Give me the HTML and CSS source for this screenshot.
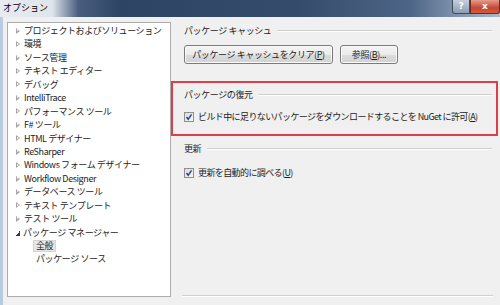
FILE: index.html
```html
<!DOCTYPE html>
<html lang="ja">
<head>
  <meta charset="UTF-8" />
  <title>オプション</title>
  <link rel="stylesheet" href="styles.css">
</head>
<body>
  <div class="titlebar">
    <span class="title">オプション</span>
    <span class="caption-btns">
      <span class="cbtn help">?</span>
      <span class="cbtn close">x</span>
    </span>
  </div>

  <div class="window">
    <ul class="tree">
      <li><span class="arrow"></span>プロジェクトおよびソリューション</li>
      <li><span class="arrow"></span>環境</li>
      <li><span class="arrow"></span>ソース管理</li>
      <li><span class="arrow"></span>テキスト エディター</li>
      <li><span class="arrow"></span>デバッグ</li>
      <li><span class="arrow"></span>IntelliTrace</li>
      <li><span class="arrow"></span>パフォーマンス ツール</li>
      <li><span class="arrow"></span>F# ツール</li>
      <li><span class="arrow"></span>HTML デザイナー</li>
      <li><span class="arrow"></span>ReSharper</li>
      <li><span class="arrow"></span>Windows フォーム デザイナー</li>
      <li><span class="arrow"></span>Workflow Designer</li>
      <li><span class="arrow"></span>データベース ツール</li>
      <li><span class="arrow"></span>テキスト テンプレート</li>
      <li><span class="arrow"></span>テスト ツール</li>
      <li><span class="arrow open"></span>パッケージ マネージャー</li>
      <li class="child"><span class="selected">全般</span></li>
      <li class="child">パッケージ ソース</li>
    </ul>

    <div class="panel">
      <div class="group cache">
        <div class="group-head"><span>パッケージ キャッシュ</span><span class="rule"></span></div>
        <div class="buttons">
          <button class="btn wide">パッケージ キャッシュをクリア(<u>P</u>)</button>
          <button class="btn">参照(<u>B</u>)...</button>
        </div>
      </div>

      <div class="group restore">
        <div class="group-head"><span>パッケージの復元</span><span class="rule"></span></div>
        <label class="check">
          <span class="box"><svg width="10" height="10" viewBox="0 0 10 10"><path d="M2.5 5 L4.2 7.2 L7.6 2.4" fill="none" stroke="#26418a" stroke-width="1.4"/></svg></span>
          ビルド中に足りないパッケージをダウンロードすることを NuGet に許可(<u>A</u>)
        </label>
      </div>

      <div class="group update">
        <div class="group-head"><span>更新</span><span class="rule"></span></div>
        <label class="check">
          <span class="box"><svg width="10" height="10" viewBox="0 0 10 10"><path d="M2.5 5 L4.2 7.2 L7.6 2.4" fill="none" stroke="#26418a" stroke-width="1.4"/></svg></span>
          更新を自動的に調べる(<u>U</u>)
        </label>
      </div>

      <div class="footer-rule"></div>
    </div>
  </div>
</body>
</html>
```

FILE: styles.css
```css
body {
  margin: 0;
  width: 500px;
  height: 305px;
  overflow: hidden;
  background: #f0f0f0;
  font-family: "Noto Sans CJK JP", "Noto Sans", sans-serif;
  font-size: 9px;
  color: #1c1c1c;
  display: flex;
  flex-direction: column;
}
.titlebar {
  height: 17px;
  flex: none;
  display: flex;
  justify-content: space-between;
  background: linear-gradient(to right, #e8ecf1 0, #dfe5ec 52px, #4a5f80 78px, #2e4465 120px, #364c6c 300px, #4d6586 410px, #7b8fa9 452px, #a9b7c8 500px);
}
.title {
  padding: 2px 0 0 3px;
  line-height: 12px;
  color: #000;
}
.caption-btns {
  display: flex;
  height: 14px;
}
.cbtn {
  color: #fff;
  font-family: "DejaVu Sans", sans-serif;
  font-weight: bold;
  text-align: center;
  line-height: 13px;
  font-size: 9px;
  border: 1px solid #3d4b5e;
  border-top: none;
}
.help {
  width: 16px;
  background: linear-gradient(#c4cfdb, #8d9db2);
  border-radius: 0 0 0 3px;
}
.close {
  width: 28px;
  background: linear-gradient(#e59c8d, #c84632 60%, #d35a40);
  border-color: #6b2a22;
  border-radius: 0 0 3px 0;
}
.window {
  flex: 1;
  display: flex;
  border-left: 3px solid #b9cbe0;
  padding: 5px 0 8px 4px;
}
.tree {
  list-style: none;
  margin: 0;
  padding: 1px 0 0 0;
  width: 162px;
  background: #fff;
  border: 1px solid #acacac;
}
.tree li {
  height: 13.45px;
  line-height: 13.45px;
  padding-left: 16px;
  display: flex;
  align-items: center;
  white-space: nowrap;
  letter-spacing: -0.4px;
}
.tree li.child {
  padding-left: 28px;
}
.arrow {
  width: 0;
  height: 0;
  margin: 0 4px 0 -8px;
  border-left: 4px solid #a6a6a6;
  border-top: 3px solid transparent;
  border-bottom: 3px solid transparent;
  position: relative;
}
.arrow::after {
  content: "";
  position: absolute;
  left: -3px;
  top: -1.5px;
  border-left: 2px solid #fff;
  border-top: 1.5px solid transparent;
  border-bottom: 1.5px solid transparent;
}
.arrow.open {
  border: none;
  width: 5px;
  height: 5px;
  background: linear-gradient(to bottom right, transparent 50%, #3a3a3a 50%);
  margin: 2px 3px 0 -9px;
}
.arrow.open::after {
  display: none;
}
.selected {
  background: #e6e6e6;
  border: 1px solid #d4d4d4;
  margin-left: -3px;
  padding: 0 2px;
  line-height: 10px;
}
.panel {
  flex: 1;
  display: flex;
  flex-direction: column;
  padding-right: 2px;
}
.group {
  border: 2px solid transparent;
  padding: 0 4px 0 11px;
}
.group.cache {
  padding-bottom: 15px;
}
.group.restore {
  border-color: #dc3f4a;
  padding-top: 5px;
  padding-bottom: 11px;
}
.group.update {
  padding-top: 4px;
}
.group-head {
  display: flex;
  align-items: center;
  line-height: 13px;
  white-space: nowrap;
  letter-spacing: -0.4px;
}
.rule {
  flex: 1;
  margin-left: 6px;
  border-top: 1px solid #cdcdcd;
  border-bottom: 1px solid #fff;
}
.buttons {
  display: flex;
  gap: 7px;
  margin-top: 8px;
}
.btn {
  height: 19px;
  width: 58px;
  padding: 0;
  font: inherit;
  letter-spacing: -0.4px;
  color: #1c1c1c;
  border: 1px solid #7a7a7a;
  border-radius: 3px;
  background: linear-gradient(#f4f4f4 0, #ebebeb 50%, #dcdcdc 51%, #d2d2d2 100%);
  box-shadow: inset 0 0 0 1px #fbfbfb;
}
.btn.wide {
  width: 149px;
}
.check {
  display: flex;
  align-items: center;
  line-height: 13px;
  white-space: nowrap;
  letter-spacing: -0.6px;
}
.restore .check {
  margin-top: 9px;
}
.update .check {
  margin-top: 11px;
}
.box {
  width: 10px;
  height: 10px;
  box-sizing: border-box;
  border: 1px solid #8e8f8f;
  background: linear-gradient(135deg, #dcdcdc, #f6f6f6);
  margin-right: 4px;
  display: flex;
  align-items: center;
  justify-content: center;
}
.box svg {
  flex: none;
}
.footer-rule {
  margin: auto 5px 0 11px;
  border-top: 1px solid #cfcfcf;
  border-bottom: 1px solid #fff;
}
```
